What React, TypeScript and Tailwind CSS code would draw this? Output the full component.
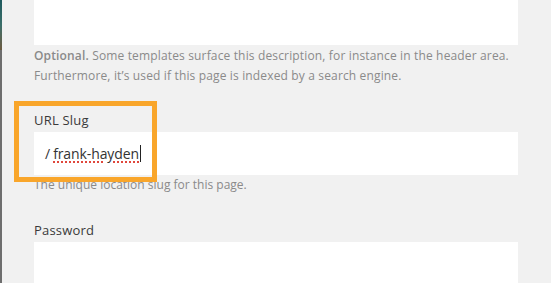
export default function App() {
  return (
    <div
      className="relative flex h-[283px] w-[551px] overflow-hidden bg-[#f1f1f1]"
      style={{ fontFamily: '"Open Sans", "Liberation Sans", sans-serif' }}
    >
      <div className="flex w-[2px] shrink-0 flex-col">
        <div className="h-[50px] shrink-0 bg-gradient-to-b from-[#1f5a5e] via-[#3b6f6a] to-[#6b5a40]" />
        <div className="flex-1 bg-[#6e6e6e]" />
      </div>

      <div className="flex flex-1 flex-col pl-[32px] pr-[33px]">
        <div className="h-[45px] shrink-0 bg-white" />
        <p className="mt-[1px] shrink-0 text-[12px] leading-[20px] tracking-[0.15px] text-[#8a8a8a]">
          <span className="font-semibold">Optional.</span> Some templates surface this description, for instance in the
          header area. Furthermore, it’s used if this page is indexed by a search engine.
        </p>

        <label className="mt-[26px] shrink-0 text-[13px] leading-[16px] font-medium tracking-[0.2px] text-[#3a3a3a]">
          URL Slug
        </label>
        <div className="mt-[4px] flex h-[43px] shrink-0 items-center bg-white pl-[11px] text-[14px] text-[#333]">
          <span className="mr-[3px]">/</span>
          <span className="tracking-[-0.1px] underline decoration-[#e0483c] decoration-dotted decoration-[1.5px] underline-offset-[2px]">
            frank-hayden
          </span>
          <span className="ml-[1px] h-[17px] w-px bg-[#222]" />
        </div>
        <p className="shrink-0 text-[12px] leading-[20px] text-[#8a8a8a]">The unique location slug for this page.</p>

        <label className="mt-[27px] shrink-0 text-[13px] leading-[16px] font-medium tracking-[0.2px] text-[#3a3a3a]">
          Password
        </label>
        <div className="mt-[4px] h-[60px] shrink-0 bg-white" />
      </div>

      <div className="pointer-events-none absolute left-[14px] top-[101px] h-[81px] w-[143px] border-[5px] border-[#f9a62b]" />
    </div>
  );
}
